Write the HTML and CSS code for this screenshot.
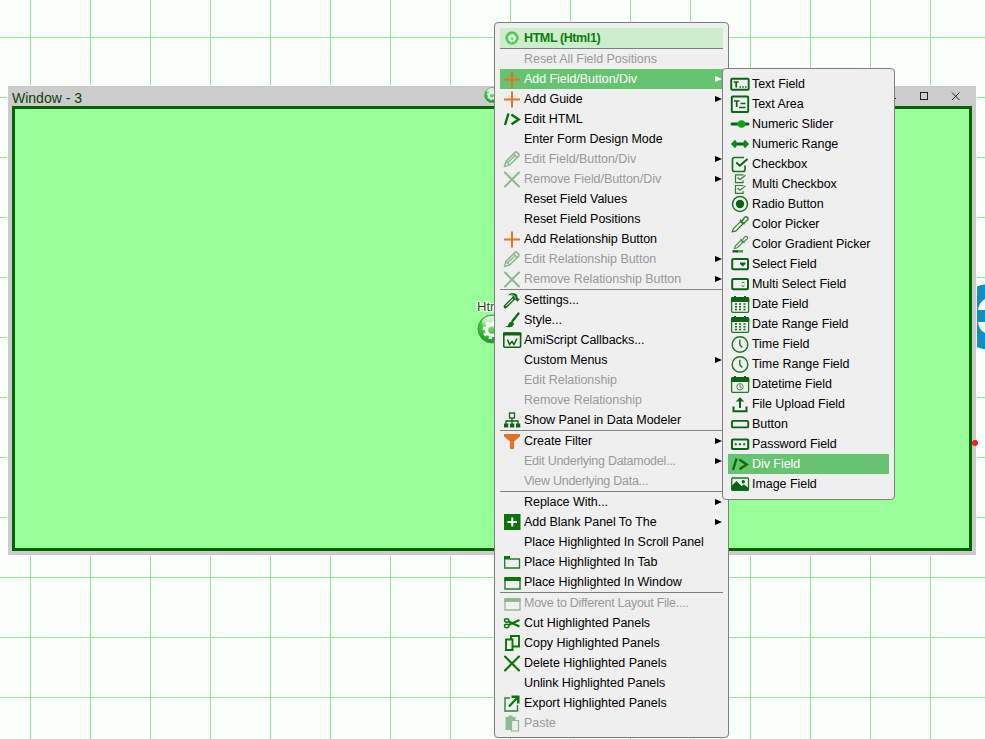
FILE: index.html
```html
<!DOCTYPE html>
<html lang="en">
<head>
<meta charset="utf-8">
<title>Layout editor</title>
<link rel="stylesheet" href="styles.css">
</head>
<body>
<svg class="defs" width="0" height="0" aria-hidden="true">
  <defs>
    <pattern id="gridlines" x="30" y="37" width="60" height="60" patternUnits="userSpaceOnUse"><path d="M0 0h60v1H0zM0 0h1v60H0z" fill="#99e699"/></pattern>
    <radialGradient id="ball" cx=".45" cy=".3" r=".75"><stop offset="0" stop-color="#8cf08c"/><stop offset=".55" stop-color="#35c335"/><stop offset="1" stop-color="#0b8a1b"/></radialGradient>
    <linearGradient id="shine" x1="0" y1="0" x2="0" y2="1"><stop offset="0" stop-color="#fff" stop-opacity=".9"/><stop offset="1" stop-color="#fff" stop-opacity=".1"/></linearGradient>
    <radialGradient id="lime" cx=".5" cy=".45" r=".6"><stop offset="0" stop-color="#7de67d"/><stop offset="1" stop-color="#3cc43c"/></radialGradient>
  </defs>
  <symbol id="gear" viewBox="0 0 30 30">
    <circle cx="15" cy="15" r="14" fill="url(#ball)" stroke="#4c9c4c"/>
    <ellipse cx="15" cy="8" rx="10" ry="6" fill="url(#shine)"/>
    <circle cx="15" cy="16" r="5.500" fill="none" stroke="#fff" stroke-width="3.400"/>
    <circle cx="15" cy="16" r="8" fill="none" stroke="#fff" stroke-width="2.600" stroke-dasharray="3.140 3.140"/>
  </symbol>
  <symbol id="gear-small" viewBox="0 0 14 14">
    <circle cx="7" cy="7" r="6.200" fill="url(#lime)" stroke="#55b855" stroke-width=".8"/>
    <circle cx="7" cy="7.300" r="2.500" fill="none" stroke="#fff" stroke-width="1.500"/>
    <circle cx="7" cy="7.300" r="3.800" fill="none" stroke="#fff" stroke-width="1" stroke-dasharray="1.500 1.500"/>
  </symbol>
  <symbol id="plus" viewBox="0 0 20 20"><path d="M2 10.500h16M10 2.500v16" stroke="#e27426" stroke-width="2" fill="none"/></symbol>
  <symbol id="code" viewBox="0 0 20 20"><path d="M6.500 4.500L3 16M9.300 5.500l7.400 4.900-7.200 4.800" stroke="#047204" stroke-width="2.400" fill="none"/></symbol>
  <symbol id="pencil" viewBox="0 0 20 20"><path d="M2.600 17.500l1.300-5L13 3.400q1-1 2 0l1.700 1.700q1 1 0 2L7.500 16.200zM4 12.500l3.500 3.600M11.500 5l3.600 3.600M6 13.500l6.500-6.300" stroke="#047204" stroke-width="1.500" fill="none"/></symbol>
  <symbol id="cross" viewBox="0 0 20 20"><path d="M3 3.500l14 14M17 3.500l-14 14" stroke="#047204" stroke-width="2.100" stroke-linecap="round" fill="none"/></symbol>
  <symbol id="hammer" viewBox="0 0 20 20"><path d="M11.800 8.200L3.500 16.500" stroke="#0d5f14" stroke-width="3.600" stroke-linecap="round"/><path d="M11 9L3.800 16.200" stroke="#d4e8d0" stroke-width="1.100"/><path d="M6 5.500q3-3.700 7.500-1.800l1.500 1 .8 3.500 2 .8-2.300 2.700-1.700-1.700-3.500-1.500.5-2.500q-2.200-1.500-4.800-.5z" fill="#0d6f14"/><path d="M9.500 4.500l3 1.500 1 2.500" stroke="#bcdcb8" stroke-width=".8" fill="none"/></symbol>
  <symbol id="brush" viewBox="0 0 20 20"><path d="M16.500 3.500L10.500 11" stroke="#0c6b18" stroke-width="2.300" stroke-linecap="round"/><path d="M3 16.500q3 .2 3.600-2.500.8-2.700 3.400-2.300 2.800 1 1.700 3.300-2 3.800-8.700 1.500z" fill="#04780a"/></symbol>
  <symbol id="script" viewBox="0 0 20 20"><rect x="1.800" y="3" width="16.800" height="14.300" rx="1" fill="none" stroke="#0d6414" stroke-width="1.600"/><path d="M1 4h18.400" stroke="#0d6414" stroke-width="3"/><path d="M5.500 9.500l2 5 2.500-3 2 3 3-6" fill="none" stroke="#0d6414" stroke-width="1.500"/></symbol>
  <symbol id="tree" viewBox="0 0 20 20"><path d="M10 8v3M4 14v-3h12v3M10 11v3" fill="none" stroke="#0d6414" stroke-width="1.300"/><rect x="7.500" y="3" width="5" height="5" fill="none" stroke="#0d6414" stroke-width="1.300"/><path d="M2 13.500h4.300v4H2zM8 13.500h4.300v4H8zM14 13.500h4.300v4H14z" fill="#0d6414"/></symbol>
  <symbol id="funnel" viewBox="0 0 20 20"><path d="M2 3h16v2.500l-6 5V18H8v-7.500l-6-5z" fill="#e27426"/></symbol>
  <symbol id="addpanel" viewBox="0 0 20 20"><path d="M2 2h16.500v16H2z" fill="#087508"/><path d="M5.500 10h9.500M10.300 5.500v9" stroke="#fff" stroke-width="2"/></symbol>
  <symbol id="tab" viewBox="0 0 20 20"><path d="M2.700 5.500V16h14.800V7H8" fill="none" stroke="#1f7d2c" stroke-width="1.300"/><path d="M2 4h6v3.500H2z" fill="#087508"/></symbol>
  <symbol id="win" viewBox="0 0 20 20"><path d="M3 6v11h15V6" fill="none" stroke="#1f7d2c" stroke-width="1.400"/><path d="M2.300 5h16.400v4H2.300z" fill="#087508"/></symbol>
  <symbol id="cut" viewBox="0 0 20 20"><path d="M6.500 8.500l11 5M6.500 12l11-5" stroke="#087508" stroke-width="2"/><ellipse cx="4.700" cy="7.500" rx="2.200" ry="1.700" fill="none" stroke="#087508" stroke-width="1.400"/><ellipse cx="4.700" cy="13" rx="2.200" ry="1.700" fill="none" stroke="#087508" stroke-width="1.400"/></symbol>
  <symbol id="copy" viewBox="0 0 20 20"><path d="M9 3h8v10.500H9z" fill="none" stroke="#087508" stroke-width="1.900"/><path d="M4 6.500h6.500v10.500H4z" fill="#efefef" stroke="#087508" stroke-width="1.900"/></symbol>
  <symbol id="export" viewBox="0 0 20 20"><path d="M8 5H3v13h12.500v-6" fill="none" stroke="#2d8334" stroke-width="1.400"/><path d="M7 13.500L15 5" stroke="#087508" stroke-width="2.300"/><path d="M9.500 2.500h8v8h-2.500V5H9.500z" fill="#087508"/></symbol>
  <symbol id="paste" viewBox="0 0 20 20"><path d="M3.500 4h3V2.500h4V4h3v4H9v9H3.500z" fill="#087508"/><path d="M9.500 7.500h7V18h-7z" fill="#efefef" stroke="#087508" stroke-width="1.200"/></symbol>

  <symbol id="textfield" viewBox="0 0 20 20"><rect x="1.200" y="4.700" width="17.500" height="11" rx="1" fill="none" stroke="#0a6414" stroke-width="1.900"/><path d="M3.700 8h5M6.200 8v5.500M9.500 13h1.500M12.300 13h1.500M15 13h1.500" stroke="#0a6414" stroke-width="1.700"/></symbol>
  <symbol id="textarea" viewBox="0 0 20 20"><rect x="1.800" y="2.500" width="16.400" height="15.500" rx=".8" fill="none" stroke="#0a6414" stroke-width="1.900"/><path d="M4 7h5.500M6.700 7v6M10.500 9.500h5M9 13.500h6.500" stroke="#0a6414" stroke-width="1.700"/></symbol>
  <symbol id="slider" viewBox="0 0 20 20"><path d="M2 10h16" stroke="#0a6414" stroke-width="3" stroke-linecap="round"/><circle cx="11.500" cy="10" r="3.800" fill="#0aa51a"/></symbol>
  <symbol id="range" viewBox="0 0 20 20"><path d="M3 10h14" stroke="#0a6414" stroke-width="3"/><path d="M.8 10L5 5.800l1.500 1.700v5L5 14.200zM19.200 10L15 5.800l-1.500 1.700v5l1.500 1.700z" fill="#0a8f18"/></symbol>
  <symbol id="check" viewBox="0 0 20 20"><path d="M14 3.500H4.500Q2.500 3.500 2.500 5.500v10q0 2 2 2h8.500q2 0 2-2v-4" fill="none" stroke="#1a7422" stroke-width="1.700"/><path d="M6.300 8.500l3.500 3.300L17.500 5" fill="none" stroke="#0a6414" stroke-width="1.900"/></symbol>
  <symbol id="multicheck" viewBox="0 0 20 20"><g fill="none" stroke="#2a7f30" stroke-width="1.200"><path d="M13.500.8H5.500v7.900H13V6.200M7.500 3.500l2.500 2 5.500-4.300M13.500 11.500H5.500v7.900H13V17M7.500 14.200l2.500 2 5.500-4.300"/></g></symbol>
  <symbol id="radio" viewBox="0 0 20 20"><circle cx="10" cy="10" r="7.500" fill="none" stroke="#1a7422" stroke-width="1.500"/><circle cx="10" cy="10" r="4.200" fill="#0a6414"/></symbol>
  <symbol id="picker" viewBox="0 0 20 20"><path d="M2.300 17.700l1-3L10.500 7.500l2.400 2.400-7.200 7.200z" fill="none" stroke="#2a7f30" stroke-width="1.200"/><path d="M10 5.700l4.500 4.500M12 7l2.500-3.500q1.700-1.500 3 0t-.2 2.700L14 9" fill="none" stroke="#2a7f30" stroke-width="1.400"/></symbol>
  <symbol id="gradient" viewBox="0 0 20 20"><path d="M4.500 14.500l.8-2.500L11 6.300l2 2-5.700 5.500zM10.500 5l4 4M12.500 6l2-3q1.300-1.300 2.500-.2t-.2 2.400L14 7.500" fill="none" stroke="#4a8f4c" stroke-width="1.200"/><path d="M2.500 16.200h5.500v2.300H2.500z" fill="#0a5f14"/><path d="M8 16.200h5v2.300H8z" fill="#18b428"/></symbol>
  <symbol id="select" viewBox="0 0 20 20"><rect x="2.200" y="5" width="15.800" height="10.300" rx="1" fill="none" stroke="#0a6414" stroke-width="2"/><path d="M10 8.500h5.500v1.500l-2.700 2.500L10 10z" fill="#0a6414"/></symbol>
  <symbol id="multiselect" viewBox="0 0 20 20"><rect x="2.200" y="5" width="15.800" height="10.300" rx="1" fill="none" stroke="#0a6414" stroke-width="2"/><path d="M11.500 9l1.500-1 1.500 1M11.500 11.500l1.500 1 1.500-1" fill="none" stroke="#2a7f30"/></symbol>
  <symbol id="date" viewBox="0 0 20 20"><rect x="1.600" y="4" width="17" height="14.300" rx="1" fill="none" stroke="#1f7d20" stroke-width="1.300"/><path d="M1 4l1-1h2V2h2v1h8V2h2v1h2.200l1 1v4H1z" fill="#0a6414"/><path d="M5 10h2M9 10h2M13.500 10h2M5 12.800h2M9 12.800h2M13.500 12.800h2M5 15.500h2M9 15.500h2M13.500 15.500h2" stroke="#0a6414" stroke-width="1.500"/></symbol>
  <symbol id="clock" viewBox="0 0 20 20"><circle cx="10" cy="10.500" r="7.800" fill="none" stroke="#1a7422" stroke-width="1.400"/><path d="M9.800 5.800v5l2.500 2.700" fill="none" stroke="#1a7422" stroke-width="1.400"/></symbol>
  <symbol id="datetime" viewBox="0 0 20 20"><rect x="1.600" y="4" width="17" height="14.300" rx="1" fill="none" stroke="#1f7d20" stroke-width="1.300"/><path d="M1 4l1-1h2V2h2v1h8V2h2v1h2.200l1 1v4H1z" fill="#0a6414"/><circle cx="10" cy="12.800" r="3.200" fill="none" stroke="#4a8f4c"/><path d="M10 10.800v2l1.500 1" stroke="#1f7d20" fill="none"/></symbol>
  <symbol id="upload" viewBox="0 0 20 20"><path d="M3.500 12.500v4.800h13v-4.800M10 14V6" fill="none" stroke="#0a6414" stroke-width="2"/><path d="M5.800 7.500L10 3.300l4.200 4.200z" fill="#0a6414"/></symbol>
  <symbol id="button" viewBox="0 0 20 20"><rect x="1.900" y="6.900" width="16.300" height="6.500" rx="1" fill="none" stroke="#0a6414" stroke-width="1.900"/></symbol>
  <symbol id="password" viewBox="0 0 20 20"><rect x="2" y="5.500" width="16.200" height="9.500" rx="1" fill="none" stroke="#0a6414" stroke-width="2.100"/><path d="M4.700 10.200h2M8.900 10.200h2M13.200 10.200h2" stroke="#0a6414" stroke-width="2"/></symbol>
  <symbol id="image" viewBox="0 0 20 20"><rect x="1.700" y="4" width="16.800" height="12.300" rx="1" fill="none" stroke="#1a7422" stroke-width="1.300"/><path d="M1.500 12l5-5 5 5 2.500-1.500 4.500 3.500v2.500h-17z" fill="#0a6414"/><circle cx="13.300" cy="7.700" r="1.700" fill="#0a6414"/></symbol>
</svg>

<main class="desktop">
  <svg class="grid"><rect width="985" height="739" fill="url(#gridlines)"/></svg>
  <svg class="logo" viewBox="0 0 8 66"><path d="M0 2.500Q4 .8 8 .6V15Q2 18.500 1 26H8V38H1Q2 46 8 49V65.300Q4 65 0 63z" fill="#118fbf"/></svg>
  <section class="window">
    <header class="titlebar">
      <span class="title">Window - 3</span>
      <svg class="controls" viewBox="0 0 70 10" width="70" height="10"><path d="M0 7.500h6" stroke="#222"/><rect x="30.500" y="1.500" width="7" height="7" fill="none" stroke="#222"/><path d="M62 1.500l7.500 7.500M69.500 1.500L62 9" stroke="#222"/></svg>
    </header>
    <div class="canvas"></div>
  </section>
  <svg class="title-gear"><use href="#gear"/></svg>
  <div class="node"><span class="node-label">Html1</span><svg class="node-gear"><use href="#gear"/></svg></div>
  <span class="dot"></span>

  <ul class="menu main-menu">
    <li class="item head"><svg class="icon small"><use href="#gear-small"/></svg><span>HTML (Html1)</span></li>
    <li class="sep"></li>
    <li class="item off"><svg class="icon"></svg><span>Reset All Field Positions</span></li>
    <li class="item on"><svg class="icon"><use href="#plus"/></svg><span>Add Field/Button/Div</span><i class="arrow"></i></li>
    <li class="item"><svg class="icon"><use href="#plus"/></svg><span>Add Guide</span><i class="arrow"></i></li>
    <li class="item"><svg class="icon"><use href="#code"/></svg><span>Edit HTML</span></li>
    <li class="item"><svg class="icon"></svg><span>Enter Form Design Mode</span></li>
    <li class="item off"><svg class="icon"><use href="#pencil"/></svg><span>Edit Field/Button/Div</span><i class="arrow"></i></li>
    <li class="item off"><svg class="icon"><use href="#cross"/></svg><span>Remove Field/Button/Div</span><i class="arrow"></i></li>
    <li class="item"><svg class="icon"></svg><span>Reset Field Values</span></li>
    <li class="item"><svg class="icon"></svg><span>Reset Field Positions</span></li>
    <li class="item"><svg class="icon"><use href="#plus"/></svg><span>Add Relationship Button</span></li>
    <li class="item off"><svg class="icon"><use href="#pencil"/></svg><span>Edit Relationship Button</span><i class="arrow"></i></li>
    <li class="item off"><svg class="icon"><use href="#cross"/></svg><span>Remove Relationship Button</span><i class="arrow"></i></li>
    <li class="sep"></li>
    <li class="item"><svg class="icon"><use href="#hammer"/></svg><span>Settings...</span></li>
    <li class="item"><svg class="icon"><use href="#brush"/></svg><span>Style...</span></li>
    <li class="item"><svg class="icon"><use href="#script"/></svg><span>AmiScript Callbacks...</span></li>
    <li class="item"><svg class="icon"></svg><span>Custom Menus</span><i class="arrow"></i></li>
    <li class="item off"><svg class="icon"></svg><span>Edit Relationship</span></li>
    <li class="item off"><svg class="icon"></svg><span>Remove Relationship</span></li>
    <li class="item"><svg class="icon"><use href="#tree"/></svg><span>Show Panel in Data Modeler</span></li>
    <li class="sep"></li>
    <li class="item"><svg class="icon"><use href="#funnel"/></svg><span>Create Filter</span><i class="arrow"></i></li>
    <li class="item off tight"><svg class="icon"></svg><span>Edit Underlying Datamodel...</span><i class="arrow"></i></li>
    <li class="item off tight"><svg class="icon"></svg><span>View Underlying Data...</span></li>
    <li class="sep"></li>
    <li class="item"><svg class="icon"></svg><span>Replace With...</span><i class="arrow"></i></li>
    <li class="item"><svg class="icon"><use href="#addpanel"/></svg><span>Add Blank Panel To The</span><i class="arrow"></i></li>
    <li class="item"><svg class="icon"></svg><span>Place Highlighted In Scroll Panel</span></li>
    <li class="item"><svg class="icon"><use href="#tab"/></svg><span>Place Highlighted In Tab</span></li>
    <li class="item"><svg class="icon"><use href="#win"/></svg><span>Place Highlighted In Window</span></li>
    <li class="sep"></li>
    <li class="item off tight"><svg class="icon"><use href="#win"/></svg><span>Move to Different Layout File....</span></li>
    <li class="item"><svg class="icon"><use href="#cut"/></svg><span>Cut Highlighted Panels</span></li>
    <li class="item"><svg class="icon"><use href="#copy"/></svg><span>Copy Highlighted Panels</span></li>
    <li class="item"><svg class="icon"><use href="#cross"/></svg><span>Delete Highlighted Panels</span></li>
    <li class="item"><svg class="icon"></svg><span>Unlink Highlighted Panels</span></li>
    <li class="item"><svg class="icon"><use href="#export"/></svg><span>Export Highlighted Panels</span></li>
    <li class="item off"><svg class="icon"><use href="#paste"/></svg><span>Paste</span></li>
  </ul>

  <ul class="menu sub-menu">
    <li class="item"><svg class="icon"><use href="#textfield"/></svg><span>Text Field</span></li>
    <li class="item"><svg class="icon"><use href="#textarea"/></svg><span>Text Area</span></li>
    <li class="item"><svg class="icon"><use href="#slider"/></svg><span>Numeric Slider</span></li>
    <li class="item"><svg class="icon"><use href="#range"/></svg><span>Numeric Range</span></li>
    <li class="item"><svg class="icon"><use href="#check"/></svg><span>Checkbox</span></li>
    <li class="item"><svg class="icon"><use href="#multicheck"/></svg><span>Multi Checkbox</span></li>
    <li class="item"><svg class="icon"><use href="#radio"/></svg><span>Radio Button</span></li>
    <li class="item"><svg class="icon"><use href="#picker"/></svg><span>Color Picker</span></li>
    <li class="item"><svg class="icon"><use href="#gradient"/></svg><span>Color Gradient Picker</span></li>
    <li class="item"><svg class="icon"><use href="#select"/></svg><span>Select Field</span></li>
    <li class="item"><svg class="icon"><use href="#multiselect"/></svg><span>Multi Select Field</span></li>
    <li class="item"><svg class="icon"><use href="#date"/></svg><span>Date Field</span></li>
    <li class="item"><svg class="icon"><use href="#date"/></svg><span>Date Range Field</span></li>
    <li class="item"><svg class="icon"><use href="#clock"/></svg><span>Time Field</span></li>
    <li class="item"><svg class="icon"><use href="#clock"/></svg><span>Time Range Field</span></li>
    <li class="item"><svg class="icon"><use href="#datetime"/></svg><span>Datetime Field</span></li>
    <li class="item"><svg class="icon"><use href="#upload"/></svg><span>File Upload Field</span></li>
    <li class="item"><svg class="icon"><use href="#button"/></svg><span>Button</span></li>
    <li class="item"><svg class="icon"><use href="#password"/></svg><span>Password Field</span></li>
    <li class="item on"><svg class="icon"><use href="#code"/></svg><span>Div Field</span></li>
    <li class="item"><svg class="icon"><use href="#image"/></svg><span>Image Field</span></li>
  </ul>
</main>
</body>
</html>
```
FILE: styles.css
```css
* { box-sizing: border-box; }
body {
  margin: 0;
  overflow: hidden;
  font-family: "Liberation Sans", Arial, sans-serif;
  font-size: 12px;
  color: #000;
}
.defs { position: absolute; }
.desktop {
  position: relative;
  width: 985px;
  height: 739px;
  overflow: hidden;
  background: #fbfffb;
}
.grid { display: block; width: 985px; height: 739px; }
.logo { position: absolute; left: 977px; top: 284px; width: 8px; height: 66px; background: #fbfffb; }
.window {
  position: absolute;
  left: 8px;
  top: 86px;
  width: 968px;
  height: 469px;
  padding: 0 4px 4px;
  display: flex;
  flex-direction: column;
  background: #ccc;
  box-shadow: 0 0 0 1px #fbfffb;
}
.titlebar {
  height: 20px;
  flex: none;
  display: flex;
  align-items: center;
  justify-content: space-between;
  padding-right: 12px;
}
.title { font-size: 14px; line-height: 16px; padding-top: 4px; color: #0a400a; }
.controls { display: block; }
.canvas { flex: 1; background: #9f9; border: 3px solid #006400; }
.title-gear { position: absolute; left: 484px; top: 87px; width: 16px; height: 16px; }
.node { position: absolute; left: 477px; top: 299px; }
.node-label {
  display: block;
  font-size: 13px;
  line-height: 15px;
  color: #0a500a;
  text-shadow: 1px 0 #fff, -1px 0 #fff, 0 1px #fff, 0 -1px #fff, 1px 1px #fff, -1px -1px #fff, 1px -1px #fff, -1px 1px #fff, 0 0 2px #fff, 0 0 2px #fff;
}
.node-gear { display: block; width: 30px; height: 30px; }
.dot { position: absolute; left: 972px; top: 440px; width: 6px; height: 6px; border-radius: 50%; background: #ee1c24; }

.menu {
  position: absolute;
  margin: 0;
  padding: 5px;
  list-style: none;
  background: #efefef;
  border: 1px solid #808080;
  border-radius: 4px;
}
.main-menu { left: 494px; top: 22px; width: 235px; height: 716px; }
.sub-menu { left: 722px; top: 68px; width: 173px; height: 432px; }
.item {
  display: flex;
  align-items: center;
  height: 20px;
  padding-left: 2px;
  line-height: 20px;
  white-space: nowrap;
  font-size: 12.5px;
  letter-spacing: -.05px;
}
.tight { letter-spacing: -.27px; }
.icon { width: 20px; height: 20px; margin-right: 2px; flex: none; }
.icon.small { width: 14px; height: 14px; margin: 0 5px 0 3px; }
.sep { height: 1px; background: #808080; }
.head { background: #cceecc; color: #0a7d0a; font-weight: bold; letter-spacing: -.4px; }
.off { color: #999; }
.off .icon { opacity: .42; }
.on { background: #66c470; color: #fff; }
.arrow {
  margin-left: auto;
  margin-right: 1px;
  border-left: 7px solid #000;
  border-top: 3.5px solid transparent;
  border-bottom: 3.5px solid transparent;
}
.on .arrow { border-left-color: #fff; }
```
